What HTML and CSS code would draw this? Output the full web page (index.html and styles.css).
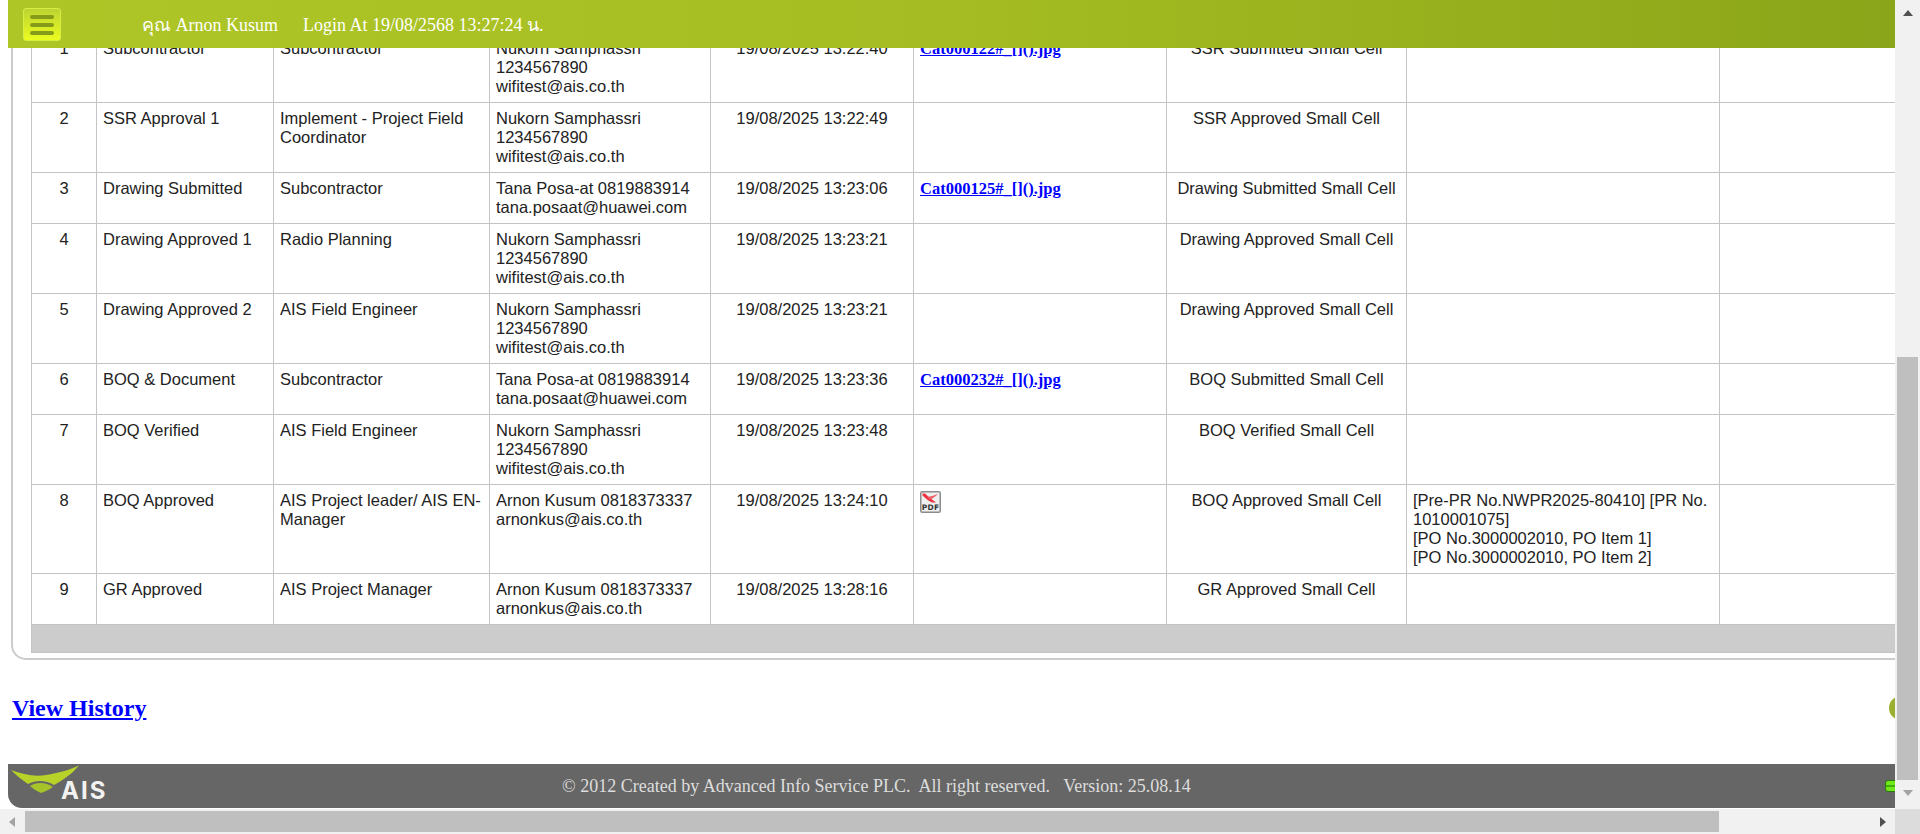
FILE: index.html
```html
<!DOCTYPE html>
<html lang="en">
<head>
  <meta charset="UTF-8" />
  <title>Workflow Detail</title>
  <link rel="stylesheet" href="styles.css">
</head>
<body>
  <div class="window">
    <div class="viewport">
      <header class="topbar">
        <button type="button" class="menu-button"><span></span><span></span><span></span></button>
        <span class="user-name">คุณ Arnon Kusum</span>
        <span class="login-at">Login At 19/08/2568 13:27:24 น.</span>
      </header>

      <div class="page">
        <div class="frame">
          <table class="flow-table">
            <colgroup>
              <col class="col-no"><col class="col-step"><col class="col-role"><col class="col-user">
              <col class="col-date"><col class="col-file"><col class="col-status"><col class="col-remark"><col class="col-extra">
            </colgroup>
            <tbody>
              <tr>
                <td class="center">1</td><td>Subcontractor</td><td>Subcontractor</td>
                <td>Nukorn Samphassri 1234567890 wifitest@ais.co.th</td>
                <td class="center">19/08/2025 13:22:40</td>
                <td><a href="#" class="file-link">Cat000122#_[]().jpg</a></td>
                <td class="center">SSR Submitted Small Cell</td><td></td><td></td>
              </tr>
              <tr>
                <td class="center">2</td><td>SSR Approval 1</td><td>Implement - Project Field Coordinator</td>
                <td>Nukorn Samphassri 1234567890 wifitest@ais.co.th</td>
                <td class="center">19/08/2025 13:22:49</td>
                <td></td>
                <td class="center">SSR Approved Small Cell</td><td></td><td></td>
              </tr>
              <tr>
                <td class="center">3</td><td>Drawing Submitted</td><td>Subcontractor</td>
                <td>Tana Posa-at 0819883914 tana.posaat@huawei.com</td>
                <td class="center">19/08/2025 13:23:06</td>
                <td><a href="#" class="file-link">Cat000125#_[]().jpg</a></td>
                <td class="center">Drawing Submitted Small Cell</td><td></td><td></td>
              </tr>
              <tr>
                <td class="center">4</td><td>Drawing Approved 1</td><td>Radio Planning</td>
                <td>Nukorn Samphassri 1234567890 wifitest@ais.co.th</td>
                <td class="center">19/08/2025 13:23:21</td>
                <td></td>
                <td class="center">Drawing Approved Small Cell</td><td></td><td></td>
              </tr>
              <tr>
                <td class="center">5</td><td>Drawing Approved 2</td><td>AIS Field Engineer</td>
                <td>Nukorn Samphassri 1234567890 wifitest@ais.co.th</td>
                <td class="center">19/08/2025 13:23:21</td>
                <td></td>
                <td class="center">Drawing Approved Small Cell</td><td></td><td></td>
              </tr>
              <tr>
                <td class="center">6</td><td>BOQ &amp; Document</td><td>Subcontractor</td>
                <td>Tana Posa-at 0819883914 tana.posaat@huawei.com</td>
                <td class="center">19/08/2025 13:23:36</td>
                <td><a href="#" class="file-link">Cat000232#_[]().jpg</a></td>
                <td class="center">BOQ Submitted Small Cell</td><td></td><td></td>
              </tr>
              <tr>
                <td class="center">7</td><td>BOQ Verified</td><td>AIS Field Engineer</td>
                <td>Nukorn Samphassri 1234567890 wifitest@ais.co.th</td>
                <td class="center">19/08/2025 13:23:48</td>
                <td></td>
                <td class="center">BOQ Verified Small Cell</td><td></td><td></td>
              </tr>
              <tr>
                <td class="center">8</td><td>BOQ Approved</td><td>AIS Project leader/ AIS EN-Manager</td>
                <td>Arnon Kusum 0818373337 arnonkus@ais.co.th</td>
                <td class="center">19/08/2025 13:24:10</td>
                <td>
                  <svg class="pdf-icon" viewBox="0 0 21 22" width="21" height="22">
                    <rect x="0.75" y="0.75" width="19.5" height="20.5" rx="1.5" fill="#efefef" stroke="#8c8c8c" stroke-width="1.5"/>
                    <path d="M2.5 2.5 L5 2.5 C8 5.5 12 8.5 16 11.5 L12 11.5 C8 9.5 5 7 2.5 4.5 Z" fill="#ee3340"/>
                    <path d="M7 6 C10 5.5 14 4.5 18 3 C15 6 12.5 7.5 10 8.5 Z" fill="#f0606a"/>
                    <text x="10.5" y="19" class="pdf-label">PDF</text>
                  </svg>
                </td>
                <td class="center">BOQ Approved Small Cell</td>
                <td>[Pre-PR No.NWPR2025-80410] [PR No. 1010001075]<br>[PO No.3000002010, PO Item 1]<br>[PO No.3000002010, PO Item 2]</td>
                <td></td>
              </tr>
              <tr>
                <td class="center">9</td><td>GR Approved</td><td>AIS Project Manager</td>
                <td>Arnon Kusum 0818373337 arnonkus@ais.co.th</td>
                <td class="center">19/08/2025 13:28:16</td>
                <td></td>
                <td class="center">GR Approved Small Cell</td><td></td><td></td>
              </tr>
              <tr class="table-foot"><td colspan="9"></td></tr>
            </tbody>
          </table>
        </div>

        <div class="history-row">
          <a href="#" class="history-link">View History</a>
          <span class="green-ball"></span>
        </div>

        <footer class="footer">
          <div class="ais-logo">
            <svg viewBox="0 0 72 34" width="72" height="34">
              <path d="M1 5 C12 9 24 12 36 10 C48 8 60 5 69 0.5 C63 8 52 16 44 20 C36 15 26 15 18 19 C12 15 6 10 1 5 Z" fill="#b8d22a"/>
              <path d="M20 21 C26 17 36 17 43 22 C39 25 34 27 31 28 C27 26 23 24 20 21 Z" fill="#a6c32a"/>
            </svg>
            <span class="ais-name">AIS</span>
          </div>
          <span class="copyright">© 2012 Created by Advanced Info Service PLC.&nbsp; All right reserved. &nbsp; Version: 25.08.14</span>
          <span class="status-light"></span>
        </footer>
      </div>
    </div>

    <div class="scroll-y">
      <span class="arrow arrow-up"></span>
      <span class="thumb-y"></span>
      <span class="arrow arrow-down"></span>
    </div>
    <div class="scroll-x">
      <span class="arrow arrow-left"></span>
      <span class="thumb-x"></span>
      <span class="arrow arrow-right"></span>
    </div>
    <div class="scroll-corner"></div>
  </div>
</body>
</html>
```

FILE: styles.css
```css
* {
  box-sizing: border-box;
}

body {
  margin: 0;
  background: white;
  font-family: 'Liberation Sans', Arial, sans-serif;
}

.window {
  display: grid;
  grid-template-columns: 1895px 25px;
  grid-template-rows: 809px 25px;
  height: 834px;
  overflow: hidden;
}

.viewport {
  position: relative;
  overflow: hidden;
  background: white;
}

/* top bar stays over the scrolled page */
.topbar {
  position: absolute;
  top: 0;
  left: 8px;
  right: 0;
  height: 48px;
  z-index: 2;
  display: flex;
  align-items: center;
  padding-left: 15px;
  color: white;
  font-family: 'Liberation Serif', 'Noto Sans', serif;
  font-size: 18px;
  background: linear-gradient(to right, #aec626, #a5bd22 50%, #8aa519);
}

.menu-button {
  display: flex;
  flex-direction: column;
  justify-content: center;
  gap: 4px;
  width: 38px;
  height: 33px;
  margin-top: 1px;
  padding: 0 6px;
  border: 1px solid #d8ec44;
  border-radius: 3px;
  background: linear-gradient(to bottom, #bcd433, #ebfc1e);
}

.menu-button span {
  display: block;
  height: 4px;
  border-radius: 2px;
  background: #869c18;
}

.user-name {
  margin-left: 81px;
}

.login-at {
  margin-left: 25px;
}

.page {
  padding-top: 32px;
  width: 1895px;
}

.frame {
  width: 2100px;
  margin-left: 11px;
  padding: 0 0 5px 18px;
  border-left: 2px solid #ccc;
  border-bottom: 2px solid #ccc;
  border-bottom-left-radius: 15px;
}

.flow-table {
  width: 2000px;
  table-layout: fixed;
  border-collapse: collapse;
  font-size: 16.5px;
  line-height: 19px;
  color: #222;
}

.flow-table td {
  padding: 6px 6px;
  border: 1px solid #c4c4c4;
  vertical-align: top;
}

.flow-table .center {
  text-align: center;
}

.col-no { width: 65px; }
.col-step { width: 177px; }
.col-role { width: 216px; }
.col-user { width: 221px; }
.col-date { width: 203px; }
.col-file { width: 253px; }
.col-status { width: 240px; }
.col-remark { width: 313px; }
.col-extra { width: 312px; }

.file-link {
  font-family: 'Liberation Serif', serif;
  font-weight: bold;
  color: #0000ff;
}

.pdf-icon {
  display: block;
}

.pdf-label {
  font-family: 'DejaVu Sans', sans-serif;
  font-size: 7.5px;
  font-weight: bold;
  letter-spacing: 0.3px;
  text-anchor: middle;
  fill: #333;
}

.flow-table .table-foot td {
  height: 28px;
  padding: 0;
  background: #ccc;
}

.history-row {
  display: flex;
  align-items: center;
  justify-content: space-between;
  height: 104px;
  padding: 0 0 8px 12px;
}

.history-link {
  font-family: 'Liberation Serif', serif;
  font-size: 24px;
  font-weight: bold;
  color: #0000ff;
}

.green-ball {
  width: 24px;
  height: 24px;
  margin-right: -18px;
  border-radius: 50%;
  background: #9aae2f;
}

.footer {
  display: flex;
  align-items: center;
  height: 44px;
  margin-left: 8px;
  padding-left: 2px;
  background: #666;
  border-bottom-left-radius: 14px;
}

.ais-logo {
  display: flex;
  align-items: flex-end;
  width: 102px;
  height: 44px;
}

.ais-logo svg {
  flex: none;
  margin-bottom: 9px;
}

.ais-name {
  margin: 0 0 7px -21px;
  color: #f2f2f2;
  font-family: 'Inter', 'Liberation Sans', sans-serif;
  font-size: 24px;
  font-weight: 700;
  line-height: 21px;
  letter-spacing: 2px;
}

.copyright {
  margin-left: 450px;
  color: #ddd;
  font-family: 'Liberation Serif', serif;
  font-size: 18px;
}

.status-light {
  width: 14px;
  height: 12px;
  margin-left: auto;
  margin-right: -4px;
  border: 1px solid #2f7a10;
  border-radius: 3px;
  background: linear-gradient(to bottom, #6fe81a 40%, #3fae0e 45%, #3fae0e 60%, #6fe81a 65%);
}

/* scrollbars of the window */
.scroll-y {
  display: flex;
  flex-direction: column;
  align-items: center;
  background: #f1f1f1;
}

.thumb-y {
  width: 21px;
  height: 423px;
  margin-top: 341px;
  background: #bfbfbf;
}

.scroll-x {
  display: flex;
  align-items: center;
  background: #f1f1f1;
}

.thumb-x {
  width: 1694px;
  height: 21px;
  margin-left: 10px;
  background: #bfbfbf;
}

.scroll-corner {
  background: #dcdcdc;
}

.arrow {
  flex: none;
  width: 0;
  height: 0;
}

.arrow-up {
  margin-top: 10px;
  border-left: 5px solid transparent;
  border-right: 5px solid transparent;
  border-bottom: 6px solid #505050;
}

.arrow-down {
  margin-top: 10px;
  border-left: 5px solid transparent;
  border-right: 5px solid transparent;
  border-top: 6px solid #a3a3a3;
}

.arrow-left {
  margin-left: 9px;
  border-top: 5px solid transparent;
  border-bottom: 5px solid transparent;
  border-right: 6px solid #a3a3a3;
}

.arrow-right {
  margin-left: 161px;
  border-top: 5px solid transparent;
  border-bottom: 5px solid transparent;
  border-left: 6px solid #505050;
}
```
